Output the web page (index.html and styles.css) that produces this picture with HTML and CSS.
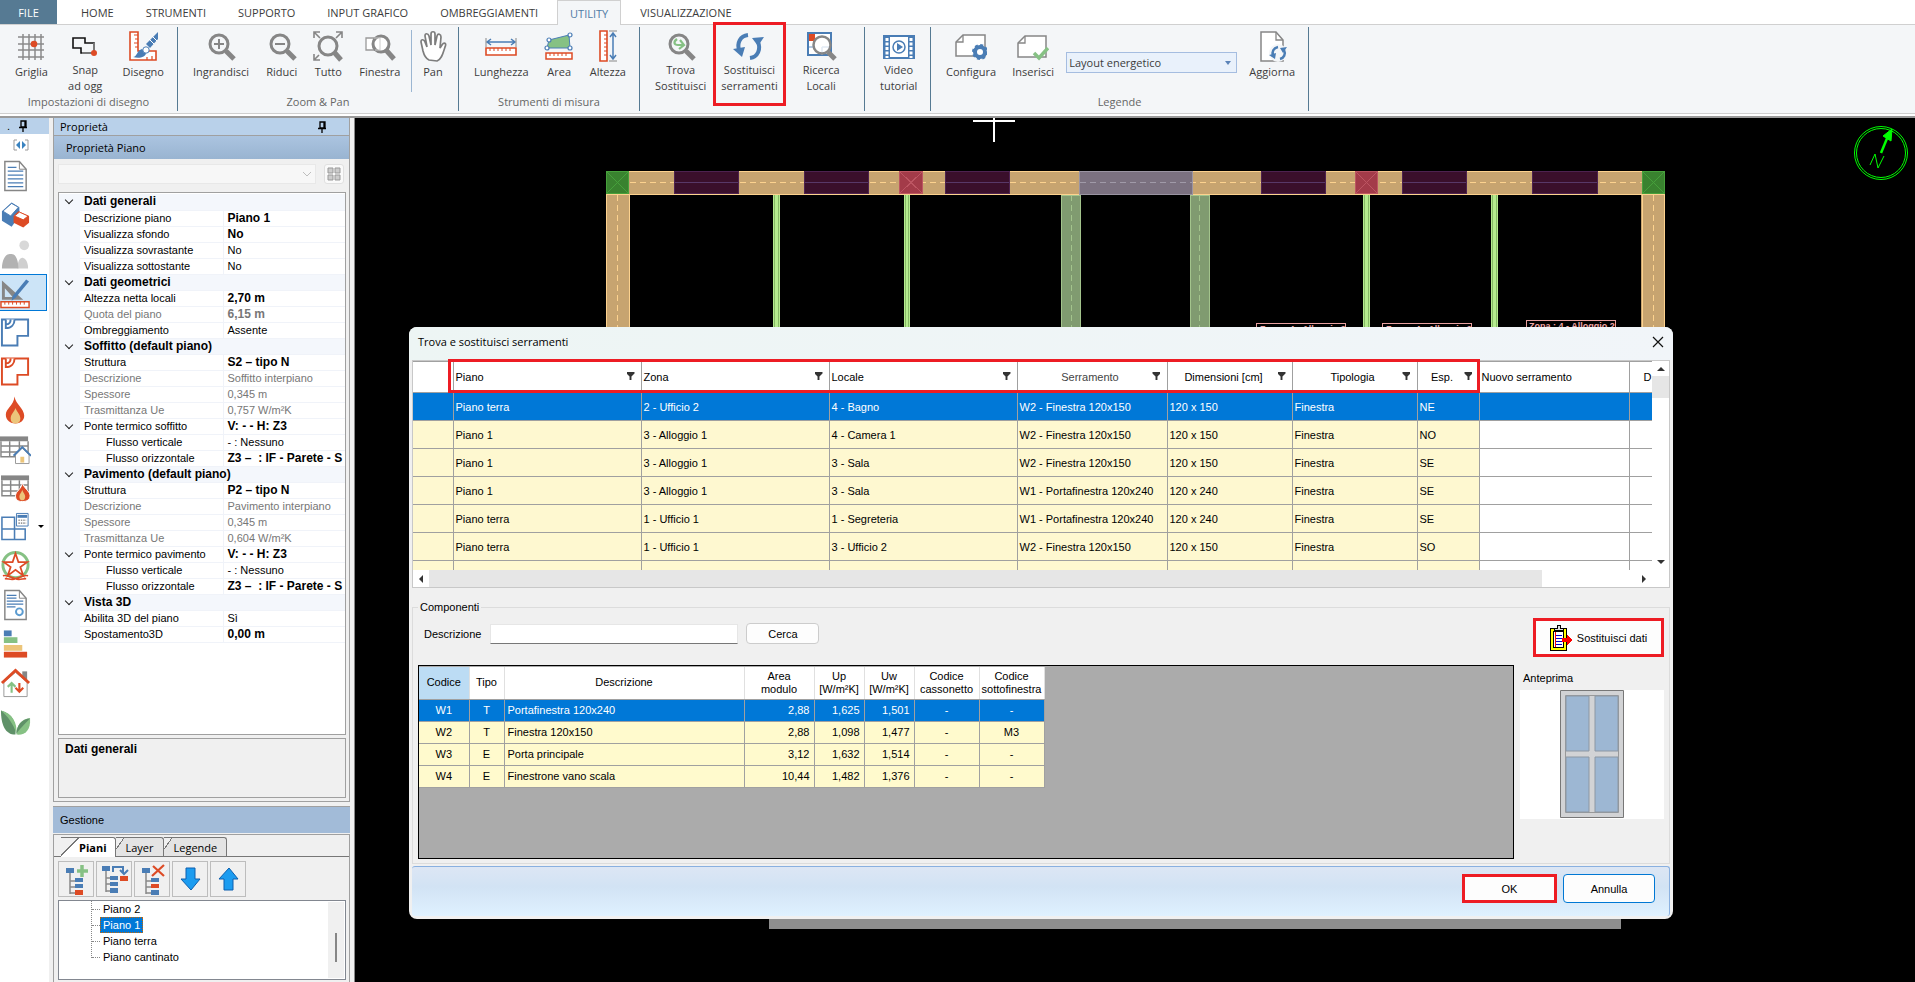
FILE: index.html
```html
<!DOCTYPE html>
<html lang="it">

<head>
    <meta charset="utf-8">
    <meta name="viewport" content="width=device-width, initial-scale=1.0">
    <title>Trova e sostituisci serramenti</title>
    <link rel="stylesheet" href="styles.css">
</head>

<body>
    <header class="ribbon">
        <nav class="tabs">
            <button class="file">FILE</button>
            <button>HOME</button>
            <button>STRUMENTI</button>
            <button>SUPPORTO</button>
            <button>INPUT GRAFICO</button>
            <button>OMBREGGIAMENTI</button>
            <button class="active">UTILITY</button>
            <button>VISUALIZZAZIONE</button>
        </nav>
        <div class="groups">
            <section class="group g-draw">
                <div class="tools">
                    <button><svg viewBox="0 0 32 32"><path d="M8 4v26M14 4v26M20 4v26M26 4v26M3 7h26M3 14h26M3 20h26M3 27h26" stroke="#8a8a8a" stroke-width="1.5"/><circle cx="19" cy="14" r="3.3" fill="#dd4b25"/></svg>Griglia</button>
                    <button class="two"><svg viewBox="0 0 32 32" fill="none"><path d="M4 8h12v5h9v10H12v-5H4z" stroke="#111" stroke-width="1.6"/><path d="M25 13v10H13" stroke="#888" stroke-width="1.6"/><circle cx="25" cy="23" r="3" fill="#dd4b25"/></svg>Snap<br>ad ogg</button>
                    <button><svg viewBox="0 0 32 32"><path d="M3 2h8v19h18v9H3z" fill="#fff" stroke="#dd4b25" stroke-width="1.6"/><path d="M11 5H7M11 9H8M11 13H7M11 17H8M25 30v-4M20 30v-3" stroke="#dd4b25" stroke-width="1.2"/><path d="M31 2v7l-8 9-4-4z" fill="#4a7db5"/><path d="M6 27c4 0 4-7 9-8l4 4c0 4-7 6-13 4z" fill="#4a7db5"/><circle cx="19" cy="20" r="3.2" fill="#fff" stroke="#4a7db5"/><path d="M22 9l5 5M25 6l5 5" stroke="#fff"/></svg>Disegno</button>
                </div>
                <h2>Impostazioni di disegno</h2>
            </section>
            <section class="group g-zoom">
                <div class="tools">
                    <button><svg viewBox="0 0 32 32" fill="none" stroke="#868686"><circle cx="14" cy="14" r="9" stroke-width="3"/><path d="M21 21l8 8" stroke-width="5"/><path d="M9 14h10M14 9v10" stroke-width="2"/></svg>Ingrandisci</button>
                    <button><svg viewBox="0 0 32 32" fill="none" stroke="#868686"><circle cx="14" cy="14" r="9" stroke-width="3"/><path d="M21 21l8 8" stroke-width="5"/><path d="M9 14h10" stroke-width="2"/></svg>Riduci</button>
                    <button><svg viewBox="0 0 32 32" fill="none" stroke="#868686"><circle cx="16" cy="16" r="9" stroke-width="3"/><path d="M22 22l7 8" stroke-width="5"/><path d="M8 8L2 2M2 8V2h6M24 8l6-6M24 2h6v6M7 25l-5 5M2 24v6h6" stroke-width="1.6"/></svg>Tutto</button>
                    <button><svg viewBox="0 0 32 32" fill="none"><path d="M2 8h14v12H2z" fill="#fff" stroke="#999" stroke-width="1.3"/><circle cx="17" cy="14" r="8" fill="#fff" stroke="#868686" stroke-width="3"/><path d="M10 8h6v12h-5" stroke="#ccc"/><path d="M22 20l8 9" stroke="#868686" stroke-width="5"/></svg>Finestra</button>
                    <span class="divider"></span>
                    <button><svg viewBox="0 0 32 32"><path d="M12 30c-4-2-5-5-6-9L4 12c0-3 3-3 4 0l2 5L8 6c0-3 3-3 4 0l2 9V4c0-3 4-3 4 0v11l2-9c1-3 4-2 4 1l-1 11 2-3c2-3 5-2 3 2-2 6-3 12-8 14z" fill="#fff" stroke="#7d7d7d" stroke-width="1.7"/></svg>Pan</button>
                </div>
                <h2>Zoom &amp; Pan</h2>
            </section>
            <section class="group g-measure">
                <div class="tools">
                    <button><svg viewBox="0 0 32 32" fill="none"><path d="M1 18h30v7H1z" fill="#fff" stroke="#dd4b25" stroke-width="1.6"/><path d="M5 18v3M9 18v3M13 18v3M17 18v3M21 18v3M25 18v3" stroke="#dd4b25"/><path d="M2 12h28M6 9l-4 3 4 3M26 9l4 3-4 3" stroke="#4a7db5" stroke-width="1.5"/><path d="M1 8v9M31 8v9" stroke="#888"/></svg>Lunghezza</button>
                    <button><svg viewBox="0 0 32 32"><path d="M6 10l20-5 1 13H4z" fill="#86c184" stroke="#4a7db5"/><path d="M3 23h26v6H3z" fill="#fff" stroke="#dd4b25" stroke-width="1.5"/><path d="M7 23v3M11 23v3M15 23v3M19 23v3M23 23v3" stroke="#dd4b25"/><g fill="#fff" stroke="#4a7db5" stroke-width="1.2"><circle cx="6" cy="10" r="2"/><circle cx="27" cy="5" r="2"/><circle cx="27" cy="18" r="2"/><circle cx="4" cy="18" r="2"/></g></svg>Area</button>
                    <button><svg viewBox="0 0 32 32" fill="none"><path d="M8 1h7v30H8z" fill="#fff" stroke="#dd4b25" stroke-width="1.6"/><path d="M15 5h-3M15 9h-3M15 13h-3M15 17h-3M15 21h-3M15 25h-3" stroke="#dd4b25"/><path d="M21 3v26M18 7l3-4 3 4M18 25l3 4 3-4" stroke="#4a7db5" stroke-width="1.5"/><path d="M17 1h8M17 31h8" stroke="#888"/></svg>Altezza</button>
                </div>
                <h2>Strumenti di misura</h2>
            </section>
            <section class="group g-find">
                <div class="tools">
                    <button class="two"><svg viewBox="0 0 32 32" fill="none"><circle cx="14" cy="14" r="9" stroke="#868686" stroke-width="3"/><path d="M21 21l8 8" stroke="#868686" stroke-width="5"/><path d="M12 9c-4 3-3 6 1 6h6M15 10l4 5-5 4" stroke="#86c184" stroke-width="2.2"/></svg>Trova<br>Sostituisci</button>
                    <button class="two framed"><svg viewBox="0 0 32 32" fill="none" stroke="#4a7db5"><path d="M15 5C7 6 4 13 6 20M17 28c8-1 11-9 8-16" stroke-width="4"/><path d="M0 19l12-2-3 10zM31 7l-12 1 6 8z" fill="#4a7db5" stroke="none"/></svg>Sostituisci<br>serramenti</button>
                    <button class="two"><svg viewBox="0 0 32 32" fill="none"><path d="M3 3h23v22H3z" fill="#fff" stroke="#4a7db5" stroke-width="2"/><path d="M4 4h6v7H4z" fill="#dd4b25"/><path d="M4 17h6M17 17v8M17 17h8" stroke="#9db8d8" stroke-width="1.5"/><circle cx="17" cy="15" r="8.5" fill="#fff" fill-opacity=".7" stroke="#868686" stroke-width="2.5"/><path d="M23 22l7 7" stroke="#868686" stroke-width="5"/></svg>Ricerca<br>Locali</button>
                </div>
            </section>
            <section class="group g-video">
                <div class="tools">
                    <button class="two"><svg viewBox="0 0 32 32" fill="none"><path d="M1 6h30v22H1z" fill="#fff" stroke="#4a7db5" stroke-width="2"/><path d="M4 6v22M28 6v22" stroke="#4a7db5" stroke-width="6"/><path d="M4 8v20M28 8v20" stroke="#fff" stroke-width="3" stroke-dasharray="3 1.5"/><circle cx="16" cy="17" r="6" stroke="#4a7db5" stroke-width="1.5"/><path d="M14 13l6 4-6 4z" fill="#4a7db5"/></svg>Video<br>tutorial</button>
                </div>
            </section>
            <section class="group g-legend">
                <div class="tools">
                    <button><svg viewBox="0 0 32 32"><path d="M8 5h22v21H1V12z" fill="#fff" stroke="#868686" stroke-width="1.5"/><path d="M8 5v7H1" fill="none" stroke="#868686" stroke-width="1.3"/><circle cx="25" cy="22" r="5" fill="#fff" stroke="#4a7db5" stroke-width="4"/><circle cx="25" cy="22" r="7" fill="none" stroke="#4a7db5" stroke-width="2" stroke-dasharray="3 2.5"/></svg>Configura</button>
                    <button><svg viewBox="0 0 32 32"><path d="M8 6h21v21H1V13z" fill="#fff" stroke="#868686" stroke-width="1.5"/><path d="M8 6v7H1" fill="none" stroke="#868686" stroke-width="1.3"/><path d="M17 23l5 5 9-10" fill="none" stroke="#86c184" stroke-width="3.5"/></svg>Inserisci</button>
                    <select class="layout" aria-label="Layout legenda"><option>Layout energetico</option></select>
                    <button><svg viewBox="0 0 32 32" fill="none"><path d="M5 2h15l7 8v21H5z" fill="#fff" stroke="#868686" stroke-width="1.5"/><path d="M20 2v8h7" stroke="#868686" stroke-width="1.3"/><circle cx="22" cy="23" r="9" fill="#f4f6f8"/><path d="M22 17c-5 1-6 5-5 8M24 29c4-1 6-5 4-9" stroke="#4a7db5" stroke-width="2.5"/><path d="M13 25l7-2-1 6zM31 17l-7 1 3 5z" fill="#4a7db5"/></svg>Aggiorna</button>
                </div>
                <h2>Legende</h2>
            </section>
        </div>
    </header>

    <main class="workspace">
        <aside class="rail">
            <div class="rail-head">. <svg class="pin" viewBox="0 0 10 12"><path d="M3 1h5v6H3zM1 7.5h8M5 8v4M7 1v6" fill="none" stroke="#000" stroke-width="1.3"/></svg></div>
            <button class="collapse" aria-label="Comprimi"><svg viewBox="0 0 16 12"><path d="M4 1H1v10h3M12 1h3v10h-3" fill="none" stroke="#999"/><path d="M7 2v8L3 6zM9 2v8l4-4z" fill="#3a83c0"/></svg></button>
            <button aria-label="Documento"><svg viewBox="0 0 32 32"><path d="M5 1h15l7 8v22H5z" fill="#fff" stroke="#868686" stroke-width="1.5"/><path d="M20 1v8h7" fill="none" stroke="#868686"/><path d="M8 7h9M8 11h16M8 15h16M8 19h16M8 23h16M8 27h16" stroke="#4a7db5" stroke-width="1.3"/></svg></button>
            <button aria-label="Involucro"><svg viewBox="0 0 32 32"><path d="M2 12L12 3l8 5v9l-8 11-10-6z" fill="#4a7db5"/><path d="M3 12l9-8 7 4-8 9z" fill="#fff" stroke="#4a7db5"/><path d="M14 17l5-5 11 5v7l-6 5-10-5z" fill="#dd4b25"/><path d="M15 17l5-4 9 4-5 4z" fill="#fff" stroke="#dd4b25"/></svg></button>
            <button aria-label="Sfondo"><svg viewBox="0 0 32 32"><circle cx="25" cy="7" r="5" fill="#d8d8d8"/><path d="M18 31c0-8 3-12 6-11s5 5 5 11z" fill="#cfcfcf"/><path d="M2 31c0-9 4-16 9-15 5-1 8 6 8 15z" fill="#b2b2b2"/></svg></button>
            <button class="selected" aria-label="Disegno"><svg viewBox="0 0 32 32"><path d="M2 3v20h22zM5 11l8 9H5z" fill="#868686" fill-rule="evenodd"/><path d="M1 25h29v6H1z" fill="#fff" stroke="#dd4b25" stroke-width="1.5"/><path d="M5 25v3M9 25v3M13 25v3M17 25v3M21 25v3M25 25v3" stroke="#dd4b25"/><path d="M27 2l3 2-14 17-4 3 1-5z" fill="#4a7db5"/></svg></button>
            <button aria-label="Zone"><svg viewBox="0 0 32 32" fill="#fff" stroke="#4a7db5" stroke-width="2"><path d="M2 3h27v17H18v10H2z"/><path d="M6 3v9c6 0 9-4 9-9M11 3c0 4-2 5-5 5"/></svg></button>
            <button aria-label="Locali"><svg viewBox="0 0 32 32" fill="#fff" stroke="#dd4b25" stroke-width="2"><path d="M2 3h27v17H18v10H2z"/><path d="M6 3v9c6 0 9-4 9-9M11 3c0 4-2 5-5 5"/></svg></button>
            <button aria-label="Riscaldamento"><svg viewBox="0 0 32 32"><path d="M15 2c1 8 10 12 10 20 0 5-4 8-9 8s-10-3-10-9c0-7 8-9 9-19z" fill="#dd4b25"/><path d="M16 14c1 4 5 6 5 11 0 3-2 5-5 5s-5-2-5-5c0-5 4-7 5-11z" fill="#ecc57a"/></svg></button>
            <button aria-label="Tabella edificio"><svg viewBox="0 0 32 32"><path d="M0 3h29v5H0z" fill="#868686"/><path d="M1 8v16h28V8M1 13h28M1 19h28M10 8v16M20 8v16" fill="none" stroke="#868686" stroke-width="1.5"/><path d="M16 22l7-7 7 7v9H16z" fill="#fff" stroke="#999"/><path d="M14 23l9-9 9 9" fill="none" stroke="#4a7db5" stroke-width="2"/><path d="M21 24h4v6h-4z" fill="#ecc57a"/></svg></button>
            <button aria-label="Tabella impianto"><svg viewBox="0 0 32 32"><path d="M1 3h29v5H1z" fill="#868686"/><path d="M2 8v16h27V8M2 13h27M2 19h27M11 8v16M20 8v16" fill="none" stroke="#868686" stroke-width="1.5"/><path d="M23 10c1 6 8 9 8 14 0 4-3 6-8 6s-7-2-7-6c0-5 7-7 7-14z" fill="#dd4b25" stroke="#fff"/><path d="M23 18c1 3 3 4 3 7 0 5-6 5-6 0 0-3 2-4 3-7z" fill="#ecc57a"/></svg></button>
            <button class="drop" aria-label="Calcolo"><svg viewBox="0 0 32 32" fill="#fff" stroke="#4a7db5" stroke-width="1.6"><path d="M2 6h13v23H2zM2 18h24v11H2zM15 18v11"/><path d="M17 2h12v13H17z" stroke-width="1"/><path d="M18 5h10" stroke-width="3"/><path d="M19 9h8M19 12h8" stroke="#999" stroke-dasharray="1.5 1"/></svg><i class="caret"></i></button>
            <button aria-label="Normativa"><svg viewBox="0 0 32 32" fill="none"><circle cx="16" cy="15" r="13" stroke="#86c184" stroke-width="3"/><path d="M16 3l3 9h9l-7 5 3 9-8-6-8 6 3-9-7-5h9z" fill="#fff" stroke="#dd4b25" stroke-width="1.8"/><path d="M3 26c5-1 8 2 13 3 5-1 8-4 13-3M5 29c4 0 8 2 11 0 3 2 7 0 11 0" stroke="#dd4b25" stroke-width="1.7"/></svg></button>
            <button aria-label="Attestato"><svg viewBox="0 0 32 32"><path d="M5 1h15l7 8v22H5z" fill="#fff" stroke="#868686" stroke-width="1.5"/><path d="M20 1v8h7" fill="none" stroke="#868686"/><path d="M7 6h10M7 9h10M7 12h17M7 15h17M7 18h9" stroke="#4a7db5" stroke-width="1.3"/><circle cx="20" cy="23" r="3.5" fill="#fff" stroke="#5b9bd0" stroke-width="2"/></svg></button>
            <button aria-label="Classe energetica"><svg viewBox="0 0 32 32"><path d="M4 2h8v6H4z" fill="#4a7db5"/><path d="M4 9h14v6H4z" fill="#86c184"/><path d="M4 17h19v6H4z" fill="#ecc57a"/><path d="M4 24h24v6H4z" fill="#dd4b25"/></svg></button>
            <button aria-label="Interventi"><svg viewBox="0 0 32 32"><path d="M23 4h5v12h-5z" fill="#868686"/><path d="M4 15L16 5l12 10v15H4z" fill="#fff" stroke="#999"/><path d="M2 16L16 3l14 13" fill="none" stroke="#dd4b25" stroke-width="3"/><path d="M12 26v-9M8 20l4-4 4 4" fill="none" stroke="#86c184" stroke-width="2.2"/><path d="M20 16v9M16 21l4 4 4-4" fill="none" stroke="#dd4b25" stroke-width="2.2"/></svg></button>
            <button aria-label="Ambiente"><svg viewBox="0 0 32 32"><path d="M1 4c12 3 16 13 15 25C5 29 1 18 1 4z" fill="#5f9168"/><path d="M1 4c12 3 17 13 16 24C14 18 8 10 1 4z" fill="#86c184"/><path d="M31 12c1 12-5 18-14 17 0-10 5-16 14-17z" fill="#86c184"/><path d="M31 12c-8 1-14 7-14 16 3-5 8-9 14-16z" fill="#5f9168"/></svg></button>
        </aside>

        <aside class="side">
            <section class="props">
                <h2 class="dock-title">Proprietà <svg class="pin" viewBox="0 0 10 12"><path d="M3 1h5v6H3zM1 7.5h8M5 8v4M7 1v6" fill="none" stroke="#000" stroke-width="1.3"/></svg></h2>
                <h3 class="dock-sub">Proprietà Piano</h3>
                <div class="picker">
                    <select disabled aria-label="Oggetto"></select>
                    <button aria-label="Categorie"><svg viewBox="0 0 14 14"><path d="M1 1h5v5H1zM8 1h5v5H8zM1 8h5v5H1zM8 8h5v5H8z" fill="#ccc" stroke="#999"/></svg></button>
                </div>
                <div class="prop-scroll">
                    <table class="prop-grid">
                        <colgroup><col class="c-exp"><col class="c-name"><col></colgroup>
                        <tr class="cat"><th><i class="chev"></i></th><td colspan="2">Dati generali</td></tr>
                        <tr><th></th><td>Descrizione piano</td><td class="b">Piano 1</td></tr>
                        <tr><th></th><td>Visualizza sfondo</td><td class="b">No</td></tr>
                        <tr><th></th><td>Visualizza sovrastante</td><td>No</td></tr>
                        <tr><th></th><td>Visualizza sottostante</td><td>No</td></tr>
                        <tr class="cat"><th><i class="chev"></i></th><td colspan="2">Dati geometrici</td></tr>
                        <tr><th></th><td>Altezza netta locali</td><td class="b">2,70 m</td></tr>
                        <tr class="ro"><th></th><td>Quota del piano</td><td class="b">6,15 m</td></tr>
                        <tr><th></th><td>Ombreggiamento</td><td>Assente</td></tr>
                        <tr class="cat"><th><i class="chev"></i></th><td colspan="2">Soffitto (default piano)</td></tr>
                        <tr><th></th><td>Struttura</td><td class="b">S2 – tipo N</td></tr>
                        <tr class="ro"><th></th><td>Descrizione</td><td>Soffitto interpiano</td></tr>
                        <tr class="ro"><th></th><td>Spessore</td><td>0,345 m</td></tr>
                        <tr class="ro"><th></th><td>Trasmittanza Ue</td><td>0,757 W/m²K</td></tr>
                        <tr><th><i class="chev"></i></th><td>Ponte termico soffitto</td><td class="b">V: - - H: Z3</td></tr>
                        <tr class="sub"><th></th><td>Flusso verticale</td><td>- : Nessuno</td></tr>
                        <tr class="sub"><th></th><td>Flusso orizzontale</td><td class="b">Z3 – &nbsp;: IF - Parete - S</td></tr>
                        <tr class="cat"><th><i class="chev"></i></th><td colspan="2">Pavimento (default piano)</td></tr>
                        <tr><th></th><td>Struttura</td><td class="b">P2 – tipo N</td></tr>
                        <tr class="ro"><th></th><td>Descrizione</td><td>Pavimento interpiano</td></tr>
                        <tr class="ro"><th></th><td>Spessore</td><td>0,345 m</td></tr>
                        <tr class="ro"><th></th><td>Trasmittanza Ue</td><td>0,604 W/m²K</td></tr>
                        <tr><th><i class="chev"></i></th><td>Ponte termico pavimento</td><td class="b">V: - - H: Z3</td></tr>
                        <tr class="sub"><th></th><td>Flusso verticale</td><td>- : Nessuno</td></tr>
                        <tr class="sub"><th></th><td>Flusso orizzontale</td><td class="b">Z3 – &nbsp;: IF - Parete - S</td></tr>
                        <tr class="cat"><th><i class="chev"></i></th><td colspan="2">Vista 3D</td></tr>
                        <tr><th></th><td>Abilita 3D del piano</td><td>Sì</td></tr>
                        <tr><th></th><td>Spostamento3D</td><td class="b">0,00 m</td></tr>
                    </table>
                </div>
                <div class="prop-help">Dati generali</div>
            </section>

            <h2 class="manage-title">Gestione</h2>
            <section class="manage">
                <div class="manage-tabs">
                    <button class="on">Piani</button>
                    <button>Layer</button>
                    <button>Legende</button>
                </div>
                <div class="tree-tools">
                    <button aria-label="Aggiungi piano"><svg viewBox="0 0 34 34"><path d="M11 10v22M11 19h6M11 25h6M11 31h6" fill="none" stroke="#888" stroke-width="1.5"/><path d="M7 6h8v5H7zM16 16h8v4h-8zM16 22h8v4h-8z" fill="#4a7db5"/><path d="M16 28h8v5h-8z" fill="#dd4b25"/><path d="M23 3v12M18 9h11" stroke="#86c184" stroke-width="3.5"/></svg></button>
                    <button aria-label="Sposta piano"><svg viewBox="0 0 34 34"><path d="M9 9v21M9 16h5M9 22h5M9 29h5" fill="none" stroke="#888" stroke-width="1.5"/><path d="M5 4h8v5H5zM13 14h8v4h-8zM13 20h8v4h-8zM13 26h8v5h-8z" fill="#4a7db5"/><path d="M23 14h8v5h-8z" fill="#dd4b25"/><path d="M16 10V5h10v6M23 8l4 4 4-4" fill="none" stroke="#4a7db5" stroke-width="2"/></svg></button>
                    <button aria-label="Elimina piano"><svg viewBox="0 0 34 34"><path d="M11 10v22M11 19h6M11 25h6M11 31h6" fill="none" stroke="#888" stroke-width="1.5"/><path d="M7 6h8v5H7zM16 16h8v4h-8zM16 28h8v5h-8z" fill="#4a7db5"/><path d="M16 22h8v4h-8z" fill="#dd4b25"/><path d="M18 4l11 10M29 3L17 14" stroke="#dd4b25" stroke-width="2.2"/></svg></button>
                    <button aria-label="Sposta giù"><svg viewBox="0 0 34 34"><path d="M13 6h9v11h5l-9 11L8 17h5z" fill="#1c9cf0" stroke="#0c5fae"/></svg></button>
                    <button aria-label="Sposta su"><svg viewBox="0 0 34 34"><path d="M13 28h9V17h5L18 6 8 17h5z" fill="#1c9cf0" stroke="#0c5fae"/></svg></button>
                </div>
                <div class="tree">
                    <ul>
                        <li><span>Piano 2</span></li>
                        <li><span class="picked">Piano 1</span></li>
                        <li><span>Piano terra</span></li>
                        <li><span>Piano cantinato</span></li>
                    </ul>
                    <div class="tree-bar"><i></i></div>
                </div>
            </section>
        </aside>

        <section class="canvas">
            <svg class="plan" viewBox="355 118 1560 864" preserveAspectRatio="xMinYMin slice" shape-rendering="crispEdges">
                <rect x="355" y="118" width="1560" height="864"/>
                <rect x="769" y="900" width="852" height="29" fill="#8e8e8e"/>
                <path d="M973 121h42M994 118v24" stroke="#fff" stroke-width="2"/>
                <!-- muri esterni -->
                <g fill="#c7a470">
                    <path d="M606 171h1059v24H606zM606 195h24v180h-24zM1641 195h24v180h-24z"/>
                </g>
                <path d="M606 171.5h1059M606 194h1059M629 195v180M606.5 195v180M1642 195v180M1664.5 195v180" fill="none" stroke="#fdd28e"/>
                <path d="M630 182.5h1012M617.5 195v180M1653.5 195v180" fill="none" stroke="#fdd28e" stroke-dasharray="6 4"/>
                <g fill="#3a0f2b" stroke="#4d2250">
                    <path d="M674.5 171.5h64v22h-64zM804.5 171.5h64v22h-64zM945.5 171.5h64v22h-64zM1261.5 171.5h64v22h-64zM1402.5 171.5h64v22h-64zM1532.5 171.5h65v22h-65z"/>
                </g>
                <path d="M675 182.5h63M805 182.5h63M946 182.5h63M1262 182.5h63M1403 182.5h63M1533 182.5h64" stroke="#583868"/>
                <path d="M1079.5 171.5h113v23h-113z" fill="#7b7180" stroke="#9a94a2"/>
                <path d="M1080 182.5h112" stroke="#a09aa8" stroke-dasharray="6 4"/>
                <g fill="#a33b49" stroke="#bd5562">
                    <path d="M899.5 171.5h23v22h-23zM899 171l24 23M923 171l-24 23M1355.5 171.5h22v22h-22zM1355 171l23 23M1378 171l-23 23"/>
                </g>
                <g fill="#39822f" stroke="#46a03b">
                    <path d="M606.5 171.5h22v22h-22zM606 171l23 23M629 171l-23 23M1642.5 171.5h22v22h-22zM1642 171l23 23M1665 171l-23 23"/>
                </g>
                <!-- tramezzi -->
                <g fill="#b5eb8e" stroke="#86b866">
                    <path d="M773 195h7v180h-7zM904 195h6v180h-6zM1363 195h7v180h-7zM1491 195h7v180h-7z" stroke="none"/>
                    <path d="M774.5 195v180M778.5 195v180M905.5 195v180M908.5 195v180M1364.5 195v180M1368.5 195v180M1492.5 195v180M1496.5 195v180"/>
                </g>
                <g fill="#809b70" stroke="#a3c48c">
                    <path d="M1061.5 195.5h19v180h-19zM1190.5 195.5h19v180h-19z"/>
                    <path d="M1071.5 195v180M1199.5 195v180" stroke-dasharray="6 4"/>
                </g>
                <g fill="none" stroke="#e8a0a0"><path d="M1256.5 340v-16.5h89V340M1382.5 340v-16.5h89V340M1526.5 340v-19.5h89V340"/></g>
                <g class="zone-tag"><text x="1260" y="332">Zona : 4 - Alloggio 2</text><text x="1386" y="332">Zona : 4 - Alloggio 2</text><text x="1529" y="329">Zona : 4 - Alloggio 2</text></g>
                <g fill="none" stroke="#0f0" shape-rendering="auto"><circle cx="1881" cy="153" r="26.5"/><circle cx="1881" cy="153" r="24.5"/><path d="M1881 153l7-17" stroke-width="2.5"/><path d="M1892 129l-1 12-8-5z" fill="#0f0"/><path d="M1870 165l5-11 3 14 6-12"/></g>
            </svg>

            <div class="dialog" role="dialog" aria-label="Trova e sostituisci serramenti">
                <div class="dlg-title">
                    <h1>Trova e sostituisci serramenti</h1>
                    <button aria-label="Chiudi"><svg viewBox="0 0 12 12"><path d="M1 1l10 10M11 1L1 11" stroke="#111" stroke-width="1.2"/></svg></button>
                </div>

                <div class="finder">
                    <div class="finder-view">
                        <table class="windows">
                            <colgroup><col class="w40"><col class="w188"><col class="w188"><col class="w188"><col class="w150"><col class="w125"><col class="w125"><col class="w62"><col class="w150"><col class="w62"></colgroup>
                            <thead>
                                <tr>
                                    <th></th>
                                    <th><div>Piano<button class="filter" aria-label="Filtra Piano"></button></div></th>
                                    <th><div>Zona<button class="filter" aria-label="Filtra Zona"></button></div></th>
                                    <th><div>Locale<button class="filter" aria-label="Filtra Locale"></button></div></th>
                                    <th class="mid dim"><div>Serramento<button class="filter" aria-label="Filtra Serramento"></button></div></th>
                                    <th class="mid tight"><div>Dimensioni [cm]<button class="filter" aria-label="Filtra Dimensioni"></button></div></th>
                                    <th class="mid"><div>Tipologia<button class="filter" aria-label="Filtra Tipologia"></button></div></th>
                                    <th class="mid tight"><div>Esp.<button class="filter" aria-label="Filtra Esp."></button></div></th>
                                    <th>Nuovo serramento</th>
                                    <th class="cut">D</th>
                                </tr>
                            </thead>
                            <tbody>
                                <tr class="sel"><td></td><td>Piano terra</td><td>2 - Ufficio 2</td><td>4 - Bagno</td><td>W2 - Finestra 120x150</td><td>120 x 150</td><td>Finestra</td><td>NE</td><td></td><td></td></tr>
                                <tr><td></td><td>Piano 1</td><td>3 - Alloggio 1</td><td>4 - Camera 1</td><td>W2 - Finestra 120x150</td><td>120 x 150</td><td>Finestra</td><td>NO</td><td></td><td></td></tr>
                                <tr><td></td><td>Piano 1</td><td>3 - Alloggio 1</td><td>3 - Sala</td><td>W2 - Finestra 120x150</td><td>120 x 150</td><td>Finestra</td><td>SE</td><td></td><td></td></tr>
                                <tr><td></td><td>Piano 1</td><td>3 - Alloggio 1</td><td>3 - Sala</td><td>W1 - Portafinestra 120x240</td><td>120 x 240</td><td>Finestra</td><td>SE</td><td></td><td></td></tr>
                                <tr><td></td><td>Piano terra</td><td>1 - Ufficio 1</td><td>1 - Segreteria</td><td>W1 - Portafinestra 120x240</td><td>120 x 240</td><td>Finestra</td><td>SE</td><td></td><td></td></tr>
                                <tr><td></td><td>Piano terra</td><td>1 - Ufficio 1</td><td>3 - Ufficio 2</td><td>W2 - Finestra 120x150</td><td>120 x 150</td><td>Finestra</td><td>SO</td><td></td><td></td></tr>
                                <tr><td></td><td></td><td></td><td></td><td></td><td></td><td></td><td></td><td></td><td></td></tr>
                            </tbody>
                        </table>
                    </div>
                    <div class="vbar"><i class="up"></i><b></b><i class="down"></i></div>
                    <div class="hbar"><i class="left"></i><b></b><i class="right"></i></div>
                    <div class="frame"></div>
                </div>

                <fieldset class="components">
                    <legend>Componenti</legend>
                    <div class="comp-main">
                        <div class="search">
                            <label for="descr">Descrizione</label>
                            <input type="text" id="descr">
                            <button class="btn">Cerca</button>
                        </div>
                        <div class="comp-area">
                            <table class="comps">
                                <colgroup><col class="w50"><col class="w35"><col class="w240"><col class="w70"><col class="w50"><col class="w50"><col class="w65"><col class="w65"></colgroup>
                                <thead>
                                    <tr><th class="sorted">Codice</th><th>Tipo</th><th>Descrizione</th><th>Area<br>modulo</th><th>Up<br>[W/m²K]</th><th>Uw<br>[W/m²K]</th><th>Codice<br>cassonetto</th><th>Codice<br>sottofinestra</th></tr>
                                </thead>
                                <tbody>
                                    <tr class="sel"><td>W1</td><td>T</td><td>Portafinestra 120x240</td><td>2,88</td><td>1,625</td><td>1,501</td><td>-</td><td>-</td></tr>
                                    <tr><td>W2</td><td>T</td><td>Finestra 120x150</td><td>2,88</td><td>1,098</td><td>1,477</td><td>-</td><td>M3</td></tr>
                                    <tr><td>W3</td><td>E</td><td>Porta principale</td><td>3,12</td><td>1,632</td><td>1,514</td><td>-</td><td>-</td></tr>
                                    <tr><td>W4</td><td>E</td><td>Finestrone vano scala</td><td>10,44</td><td>1,482</td><td>1,376</td><td>-</td><td>-</td></tr>
                                </tbody>
                            </table>
                        </div>
                    </div>
                    <div class="comp-side">
                        <button class="replace"><svg viewBox="0 0 22 26" shape-rendering="crispEdges"><path d="M0 3h17v23H0z"/><path d="M1 4h15v21H1z" fill="#ff0"/><path d="M3 6h11v17H3z"/><path d="M4 7h9v15H4z" fill="#fff"/><path d="M5 10.500h7M5 13.500h7M5 16.500h7M5 19.500h7" stroke="#00c"/><path d="M5.500 7v15" stroke="#f00"/><path d="M4.500 5.500v-2h3v-3h3v3h3v2z" fill="#ddd" stroke="#000"/><path d="M12 13h5V9l5 6-5 6v-4h-5z" fill="#f00"/></svg>Sostituisci dati</button>
                        <h3>Anteprima</h3>
                        <div class="preview">
                            <svg viewBox="0 0 64 128"><path d="M.5.5h63v127H.5z" fill="#d2d3d5" stroke="#777"/><path d="M5.5 5.5h53v117h-53z" fill="#d2d3d5" stroke="#999"/><g fill="#9db7d3" stroke="#8c97a3"><path d="M6 6h23v55H6zM35 6h23v55H35zM6 67h23v55H6zM35 67h23v55H35z"/></g></svg>
                        </div>
                    </div>
                </fieldset>

                <div class="dlg-foot">
                    <button class="ok">OK</button>
                    <button class="cancel">Annulla</button>
                </div>
            </div>
        </section>
    </main>
</body>

</html>
```

FILE: styles.css
```css
* {
    box-sizing: border-box;
}

body {
    margin: 0;
    height: 100vh;
    display: flex;
    flex-direction: column;
    overflow: hidden;
    background: #f0f0f0;
    font-family: "Liberation Sans", Arial, sans-serif;
    font-size: 11px;
    color: #000;
}

button,
input,
select {
    font: inherit;
    color: inherit;
    margin: 0;
    padding: 0;
    border: 0;
    background: none;
}

h1,
h2,
h3 {
    margin: 0;
    font-size: inherit;
    font-weight: normal;
}

svg {
    display: block;
}

table {
    border-collapse: collapse;
    table-layout: fixed;
}

td,
th {
    font-weight: normal;
    white-space: nowrap;
    overflow: hidden;
}

/* ribbon */

.ribbon {
    flex: none;
    height: 118px;
    background: #fff;
    border-bottom: 2px solid #9a9a9a;
    font-family: "Open Sans", "Noto Sans", sans-serif;
    color: #3c3c3c;
}

.tabs {
    display: flex;
    height: 25px;
    border-bottom: 1px solid #d0d0d0;
}

.tabs button {
    padding: 0 16px;
}

.tabs .file {
    width: 57px;
    height: 24px;
    margin-right: 8px;
    background: #567a93;
    color: #fff;
}

.tabs .active {
    height: 25px;
    margin: 0 3px;
    padding: 0 12px;
    border: 1px solid #d0d0d0;
    border-bottom: 0;
    background: #f4f6f8;
    color: #4f7ba5;
}

.groups {
    display: flex;
    height: 89px;
    padding-top: 2px;
    border-bottom: 1px solid #cfcfcf;
    background: #f4f6f8;
}

.group {
    height: 84px;
    border-right: 1px solid #567a93;
}

.tools {
    display: flex;
    justify-content: space-between;
    height: 67px;
    padding: 3px 13px 0 15px;
}

.tools button {
    display: flex;
    flex-direction: column;
    align-items: center;
    align-self: flex-start;
    position: relative;
    line-height: 16px;
    text-align: center;
}

.tools svg {
    width: 32px;
    height: 32px;
    margin: 0 -4px 2px;
}

.tools .two svg {
    margin-bottom: 0;
}

.group h2 {
    line-height: 16px;
    text-align: center;
    color: #666;
}

.divider {
    width: 1px;
    height: 62px;
    margin: 0 -8px 0 -7px;
    background: #9bb6d2;
}

.framed::after {
    content: "";
    position: absolute;
    inset: -8px -8px -12px;
    border: 3px solid #ed1c24;
}

.g-draw { width: 178px; }
.g-zoom { width: 281px; }
.g-measure { width: 181px; }
.g-find { width: 225px; }
.g-find .tools {
    justify-content: flex-start;
    gap: 15px;
}
.g-find .framed { margin-right: 10px; }
.g-video { width: 66px; }
.g-legend { width: 378px; }

.layout {
    width: 171px;
    height: 21px;
    margin: 22px -4px 0 -4px;
    padding: 0 20px 0 2px;
    border: 1px solid #a5bde0;
    appearance: none;
    background: url("data:image/svg+xml,%3Csvg xmlns='http://www.w3.org/2000/svg' width='6' height='4'%3E%3Cpath d='M0 0h6L3 4z' fill='%235b83b8'/%3E%3C/svg%3E") no-repeat right 5px center, #e9f1fb;
}

/* left column of tools */

.workspace {
    flex: 1;
    display: flex;
    min-height: 0;
}

.rail {
    width: 49px;
    flex: none;
    background: #fff;
}

.rail-head {
    display: flex;
    align-items: center;
    gap: 8px;
    height: 16px;
    padding-left: 7px;
    background: #b9d1ea;
}

.pin {
    width: 10px;
    height: 12px;
}

.rail button {
    display: flex;
    align-items: center;
    width: 47px;
    height: 39px;
    border: 1px solid transparent;
    border-left: 0;
}

.rail button svg {
    width: 31px;
    height: 32px;
}

.rail .collapse {
    height: 22px;
}

.rail .collapse svg {
    width: 16px;
    height: 12px;
    margin-left: 13px;
}

.rail .selected {
    height: 37px;
    margin: 1px 0;
    border-color: #0078d7;
    background: #cce4f7;
}

.caret {
    margin-left: 7px;
    border: 3px solid transparent;
    border-top-color: #000;
    border-bottom: 0;
}

/* properties */

.side {
    display: flex;
    flex-direction: column;
    flex: none;
    width: 306px;
    padding: 0 4px;
    border-right: 1px solid #888;
}

.props {
    flex: 1;
    display: flex;
    flex-direction: column;
    min-height: 0;
    border: 1px solid #a0a0a0;
    border-top: 0;
}

.dock-title {
    display: flex;
    justify-content: space-between;
    align-items: center;
    height: 17px;
    padding: 0 22px 0 6px;
    background: #b9d1ea;
}

.dock-sub {
    height: 24px;
    padding-left: 12px;
    border-top: 1px solid #a0a0a0;
    background: linear-gradient(#abc4e0, #99b4d1);
    line-height: 23px;
}

.dock-title,
.dock-sub {
    font-family: "Open Sans", "Noto Sans", sans-serif;
}

.picker {
    display: flex;
    justify-content: space-between;
    padding: 5px 5px 8px 4px;
}

.picker select {
    width: 258px;
    height: 20px;
    border: 1px solid #e6e6e6;
    appearance: none;
    background: url("data:image/svg+xml,%3Csvg xmlns='http://www.w3.org/2000/svg' width='10' height='6'%3E%3Cpath d='M1 1l4 4 4-4' fill='none' stroke='%23aaa'/%3E%3C/svg%3E") no-repeat right 3px center, #fafafa;
}

.picker button {
    width: 20px;
    height: 20px;
    padding: 2px;
    border: 1px solid #e0e0e0;
    border-radius: 3px;
    background: #fafafa;
}

.prop-scroll {
    flex: 1;
    margin: 0 3px 3px 4px;
    min-height: 0;
    overflow: hidden;
    border: 1px solid #a0a0a0;
    background: #fff;
}

.prop-grid {
    width: 100%;
    margin-top: 1px;
}

.c-exp { width: 21px; }
.c-name { width: 143px; }

.prop-grid th,
.prop-grid td {
    height: 16px;
    padding: 0 0 0 4px;
    border-bottom: 1px solid #f0f3f9;
    line-height: 15px;
}

.prop-grid th {
    padding: 0 0 0 6px;
    background: #f4f7fc;
    border-color: #f4f7fc;
}

.prop-grid td + td {
    border-left: 1px solid #f0f3f9;
}

.prop-grid .cat td {
    background: #f4f7fc;
    font-size: 12px;
    font-weight: bold;
}

.prop-grid .b {
    font-size: 12px;
    font-weight: bold;
}

.prop-grid .ro {
    color: #777;
}

.prop-grid .sub td:nth-child(2) {
    padding-left: 26px;
}

.chev {
    display: block;
    width: 6px;
    height: 6px;
    margin: -3px 0 0 1px;
    border: solid #222;
    border-width: 0 1px 1px 0;
    transform: rotate(45deg);
}

.prop-help {
    height: 60px;
    margin: 0 3px 3px 4px;
    padding: 3px 6px;
    border: 1px solid #a0a0a0;
    font-size: 12px;
    font-weight: bold;
}

.manage-title {
    height: 27px;
    margin: 4px 0 1px;
    padding-left: 7px;
    border-top: 1px solid #a0a0a0;
    background: #a2bbd8;
    line-height: 26px;
}

.manage {
    height: 148px;
    border: 1px solid #a0a0a0;
    border-bottom: 0;
}

.manage-tabs {
    display: flex;
    height: 22px;
    padding: 2px 0 0 7px;
    border-bottom: 1px solid #777;
    font-family: "Open Sans", "Noto Sans", sans-serif;
}

.manage-tabs button {
    height: 19px;
    padding: 0 9px 0 10px;
    border: 1px solid #777;
    border-left: 0;
    border-bottom: 0;
    border-radius: 0 3px 0 0;
    background: linear-gradient(125deg, transparent 6px, #777 6px, #777 7px, #e4e4e4 7px);
}

.manage-tabs .on {
    height: 20px;
    padding: 0 8px 0 18px;
    background: linear-gradient(135deg, #f0f0f0 12px, #777 12px, #777 13px, #fff 13px);
    font-weight: bold;
}

.tree-tools {
    display: flex;
    gap: 2px;
    padding: 4px 0 3px 4px;
}

.tree-tools button {
    width: 36px;
    height: 36px;
    border: 1px solid #bdbdbd;
}

.tree-tools svg {
    width: 34px;
    height: 34px;
}

.tree {
    display: flex;
    justify-content: space-between;
    height: 80px;
    margin: 0 3px 0 4px;
    border: 1px solid #828790;
    background: #fff;
}

.tree ul {
    height: 57px;
    margin: 0 0 0 32px;
    padding: 0;
    border-left: 1px dotted #888;
    list-style: none;
}

.tree li {
    display: flex;
    align-items: center;
    height: 16px;
}

.tree li::before {
    content: "";
    width: 8px;
    border-top: 1px dotted #888;
}

.tree span {
    padding: 0 3px;
    line-height: 16px;
}

.tree .picked {
    outline: 1px dotted #c60;
    outline-offset: -1px;
    background: #0078d7;
    color: #fff;
}

.tree-bar {
    width: 16px;
    margin: 1px;
    padding: 31px 7px 0;
    background: #f0f0f0;
}

.tree-bar i {
    display: block;
    width: 2px;
    height: 29px;
    background: #868686;
}

/* drawing */

.canvas {
    flex: 1;
    position: relative;
    min-width: 0;
    overflow: hidden;
    background: #000;
}

.plan {
    width: 100%;
    height: 100%;
}

.zone-tag {
    fill: #f0a8a8;
    font-size: 9px;
    font-weight: bold;
}

/* dialog */

.dialog {
    position: absolute;
    left: 54px;
    top: 209px;
    width: 1264px;
    border-radius: 8px;
    padding: 0 3px 3px;
    background: #f0f0f0;
    overflow: hidden;
}

.dlg-title {
    display: flex;
    justify-content: space-between;
    align-items: center;
    height: 33px;
    margin: 0 -3px;
    padding: 0 9px 4px;
    background: linear-gradient(90deg, #edf5f4, #f1f5f9);
    font-family: "Open Sans", "Noto Sans", sans-serif;
}

.dlg-title svg {
    width: 12px;
    height: 12px;
}

.finder {
    position: relative;
    display: grid;
    grid-template-columns: 1fr 17px;
    grid-template-rows: 209px 17px;
    border: 1px solid #c8c8c8;
    background: #fff;
}

.finder-view {
    overflow: hidden;
}

.windows {
    width: 1278px;
}

.w40 { width: 40px; }
.w188 { width: 188px; }
.w150 { width: 150px; }
.w125 { width: 125px; }
.w62 { width: 62px; }
.w50 { width: 50px; }
.w35 { width: 35px; }
.w240 { width: 240px; }
.w70 { width: 70px; }
.w65 { width: 65px; }

.windows th,
.windows td {
    padding: 0 2px;
    border: 1px solid #a0a0a0;
    border-left: 0;
    text-align: left;
}

.windows th {
    height: 31px;
}

.windows td {
    height: 28px;
    background: #fef8d0;
}

.windows td:nth-child(n+9) {
    background: #fff;
}

.windows .sel td,
.comps .sel td {
    background: #0078d7;
    color: #fff;
}

.windows th div {
    display: flex;
    align-items: center;
    justify-content: space-between;
    padding-right: 4px;
}

.windows .mid div::before {
    content: "";
    width: 8px;
}

.windows .tight div::before {
    width: 0;
}

.windows .dim {
    color: #444;
}

.windows .cut {
    padding-left: 14px;
}

.filter {
    width: 8px;
    height: 10px;
    background: #333;
    clip-path: polygon(0 0, 100% 0, 100% 15%, 62% 45%, 62% 80%, 38% 80%, 38% 45%, 0 15%);
}

.vbar,
.hbar {
    display: flex;
    align-items: center;
    background: #fff;
}

.vbar {
    flex-direction: column;
    padding: 6px 0 6px;
}

.vbar b {
    width: 17px;
    height: 22px;
    margin-top: 5px;
    background: #e6e6e6;
}

.hbar {
    padding: 0 6px;
}

.hbar b {
    flex: none;
    width: 1113px;
    height: 17px;
    margin-left: 6px;
    background: #e6e6e6;
}

.up,
.down,
.left,
.right {
    border: 4px solid transparent;
}

.up {
    border-top: 0;
    border-bottom: 4px solid #333;
}

.down {
    margin-top: auto;
    border-bottom: 0;
    border-top: 4px solid #333;
}

.left {
    border-left: 0;
    border-right: 4px solid #333;
}

.right {
    margin-left: auto;
    border-right: 0;
    border-left: 4px solid #333;
}

.frame {
    position: absolute;
    left: 35px;
    top: -2px;
    width: 1032px;
    height: 34px;
    border: 3px solid #ed1c24;
    pointer-events: none;
}

.components {
    display: flex;
    gap: 6px;
    margin: 12px 0 2px;
    padding: 9px 5px 4px;
    border: 1px solid #dcdcdc;
}

.components legend {
    padding: 0 2px;
    line-height: 14px;
}

.comp-main {
    flex: 1;
}

.search {
    display: flex;
    align-items: center;
    padding-left: 6px;
}

.search input {
    width: 248px;
    height: 20px;
    margin: 0 8px 0 9px;
    border: 1px solid #e6e6e6;
    border-bottom-color: #777;
    background: #fff;
}

.btn {
    width: 73px;
    height: 21px;
    border: 1px solid #ccc;
    border-radius: 4px;
    background: #fdfdfd;
}

.comp-area {
    height: 194px;
    margin-top: 21px;
    padding: 1px 0;
    border: 1px solid #000;
    background: #ababab;
}

.comps {
    width: 625px;
}

.comps th,
.comps td {
    height: 22px;
    padding: 0 4px;
    border: 1px solid #a0a0a0;
    border-left: 0;
    text-align: center;
}

.comps th {
    height: 32px;
    padding: 0;
    border-top: 0;
    border-right-color: #e0e0e0;
    background: #fff;
    line-height: 13px;
}

.comps .sorted {
    background: #bcdcf4;
}

.comps td {
    background: #fffacd;
}

.comps td:nth-child(3) {
    padding-left: 3px;
    text-align: left;
}

.comps td:nth-child(4),
.comps td:nth-child(5),
.comps td:nth-child(6) {
    text-align: right;
}

.comp-side {
    width: 144px;
    margin-top: -5px;
}

.replace {
    display: flex;
    align-items: center;
    justify-content: center;
    gap: 5px;
    width: 131px;
    height: 39px;
    margin-left: auto;
    border: 3px solid #ed1c24;
    background: #fdfdfd;
}

.replace svg {
    width: 22px;
    height: 26px;
}

.comp-side h3 {
    margin: 14px 0 5px;
    padding-left: 3px;
    line-height: 14px;
}

.preview {
    height: 129px;
    background: #fff;
}

.preview svg {
    width: 64px;
    height: 128px;
    margin: 0 auto;
}

.dlg-foot {
    display: flex;
    justify-content: flex-end;
    gap: 6px;
    height: 50px;
    padding: 7px 14px 0;
    border-top: 1px solid #89b0e0;
    border-right: 1px solid #89b0e0;
    border-radius: 3px;
    background: linear-gradient(#dce6f4, #d2e3f4 40%, #dff1ff);
}

.dlg-foot button {
    height: 29px;
    background: #fdfdfd;
}

.dlg-foot .ok {
    width: 95px;
    border: 3px solid #ed1c24;
}

.dlg-foot .cancel {
    width: 92px;
    border: 1px solid #0078d4;
    border-radius: 4px;
}
```
